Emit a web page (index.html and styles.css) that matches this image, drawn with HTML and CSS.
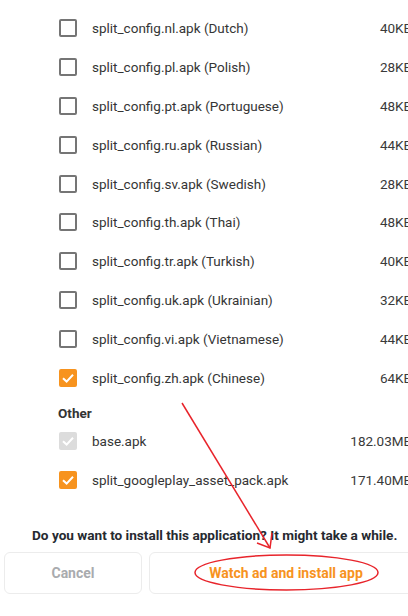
FILE: index.html
```html
<!DOCTYPE html>
<html>
<head>
    <title>Install splits</title>
    <link rel="stylesheet" href="styles.css">
</head>
<body>
<div class="page">
    <ul class="files">
        <li class="file"><span class="box"></span><span class="name">split_config.nl.apk (Dutch)</span><span class="size">40KB</span></li>
        <li class="file"><span class="box"></span><span class="name">split_config.pl.apk (Polish)</span><span class="size">28KB</span></li>
        <li class="file"><span class="box"></span><span class="name">split_config.pt.apk (Portuguese)</span><span class="size">48KB</span></li>
        <li class="file"><span class="box"></span><span class="name">split_config.ru.apk (Russian)</span><span class="size">44KB</span></li>
        <li class="file"><span class="box"></span><span class="name">split_config.sv.apk (Swedish)</span><span class="size">28KB</span></li>
        <li class="file"><span class="box"></span><span class="name">split_config.th.apk (Thai)</span><span class="size">48KB</span></li>
        <li class="file"><span class="box"></span><span class="name">split_config.tr.apk (Turkish)</span><span class="size">40KB</span></li>
        <li class="file"><span class="box"></span><span class="name">split_config.uk.apk (Ukrainian)</span><span class="size">32KB</span></li>
        <li class="file"><span class="box"></span><span class="name">split_config.vi.apk (Vietnamese)</span><span class="size">44KB</span></li>
        <li class="file"><span class="box checked"><svg viewBox="0 0 18 18"><polyline points="4,9.2 7.6,12.6 14,5.8"/></svg></span><span class="name">split_config.zh.apk (Chinese)</span><span class="size">64KB</span></li>
    </ul>

    <div class="group">Other</div>
    <ul class="files">
        <li class="file"><span class="box disabled"><svg viewBox="0 0 18 18"><polyline points="4,9.2 7.6,12.6 14,5.8"/></svg></span><span class="name">base.apk</span><span class="size">182.03MB</span></li>
        <li class="file"><span class="box checked"><svg viewBox="0 0 18 18"><polyline points="4,9.2 7.6,12.6 14,5.8"/></svg></span><span class="name">split_googleplay_asset_pack.apk</span><span class="size">171.40MB</span></li>
    </ul>

    <div class="footer">
        <p class="question">Do you want to install this application? It might take a while.</p>
        <div class="actions">
            <button class="btn cancel">Cancel</button>
            <button class="btn install">Watch ad and install app</button>
        </div>
    </div>

    <!-- red hand-drawn annotation -->
    <svg class="marks" width="427" height="616" viewBox="0 0 427 616">
        <line x1="182" y1="403" x2="270" y2="548"/>
        <polyline points="257,543 270,548 272,533"/>
        <ellipse cx="286.5" cy="572.5" rx="91.5" ry="17.5"/>
    </svg>
</div>
</body>
</html>
```

FILE: styles.css
```css
body {
    margin: 0;
    background-color: #fff;
    font-family: Roboto, "Liberation Sans", sans-serif;
    overflow: hidden;
}

.page {
    position: relative;
    width: 427px;
    height: 616px;
    padding-top: 9px;
    box-sizing: border-box;
}

.files {
    list-style: none;
    margin: 0;
    padding: 0;
}

.file {
    display: flex;
    align-items: center;
    height: 38.8px;
    padding: 0 15px 0 59px;
    font-size: 13.5px;
    color: #353535;
}

.box {
    width: 18px;
    height: 18px;
    border: 2px solid #757575;
    border-radius: 2px;
    box-sizing: border-box;
    flex-shrink: 0;
    display: flex;
}

.box svg {
    width: 18px;
    height: 18px;
    margin: -2px;
}

.box polyline {
    fill: none;
    stroke: #fff;
    stroke-width: 2;
}

.box.checked {
    background-color: #f7931e;
    border-color: #f7931e;
}

.box.disabled {
    background-color: #dcdcdc;
    border-color: #dcdcdc;
}

.name {
    flex: 1;
    margin-left: 15px;
}

.size {
    text-align: right;
    color: #3a3a3a;
}

.group {
    padding: 8px 0 0 58px;
    line-height: 17px;
    font-size: 13.5px;
    font-weight: bold;
    color: #333;
}

.footer {
    margin-top: 26px;
}

.question {
    margin: 0 0 8px 0;
    padding-left: 32px;
    line-height: 18px;
    font-size: 13.6px;
    font-weight: bold;
    color: #262a30;
}

.actions {
    display: flex;
    gap: 7px;
    padding: 0 4px;
}

.btn {
    height: 42px;
    border: 1px solid #ececec;
    border-radius: 6px;
    background-color: #fff;
    font-family: Roboto, "Liberation Sans", sans-serif;
    font-size: 14px;
    font-weight: bold;
}

.cancel {
    width: 138px;
    color: #a9abae;
}

.install {
    flex: 1;
    color: #f7931e;
}

.marks {
    position: absolute;
    left: 0;
    top: 0;
    fill: none;
    stroke: #e8242b;
    stroke-width: 1.5;
}
```
